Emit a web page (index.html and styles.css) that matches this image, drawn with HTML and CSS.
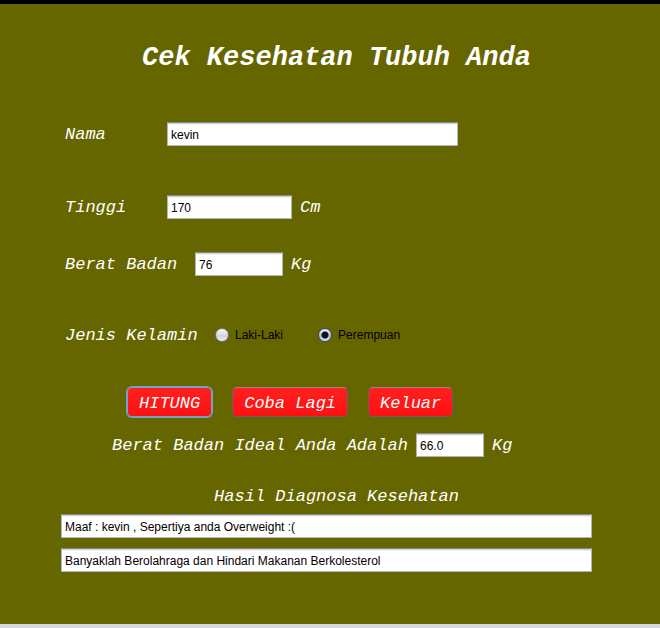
FILE: index.html
```html
<!DOCTYPE html>
<html lang="id">
<head>
<meta charset="utf-8">
<title>Cek Kesehatan Tubuh Anda</title>
<link rel="stylesheet" href="styles.css">
</head>
<body>
<main class="page">
  <h1 class="title">Cek Kesehatan Tubuh Anda</h1>
  <form class="form">
    <div class="row row-name">
      <label class="label label-short" for="nama">Nama</label>
      <input class="field field-name" id="nama" type="text" value="kevin">
    </div>
    <div class="row row-height">
      <label class="label label-short" for="tinggi">Tinggi</label>
      <input class="field field-height" id="tinggi" type="text" value="170">
      <span class="unit">Cm</span>
    </div>
    <div class="row row-weight">
      <label class="label label-long" for="berat">Berat Badan</label>
      <input class="field field-weight" id="berat" type="text" value="76">
      <span class="unit">Kg</span>
    </div>
    <div class="row row-gender" role="radiogroup" aria-labelledby="kelamin">
      <span class="label label-gender" id="kelamin">Jenis Kelamin</span>
      <label class="choice"><input class="radio" type="radio" name="kelamin">Laki-Laki</label>
      <label class="choice"><input class="radio" type="radio" name="kelamin" checked>Perempuan</label>
    </div>
    <div class="actions">
      <button class="button button-default" type="button">HITUNG</button>
      <button class="button" type="button">Coba Lagi</button>
      <button class="button" type="button">Keluar</button>
    </div>
    <div class="row row-ideal">
      <label class="label label-ideal" for="ideal">Berat Badan Ideal Anda Adalah</label>
      <input class="field field-ideal" id="ideal" type="text" value="66.0">
      <span class="unit">Kg</span>
    </div>
    <h2 class="subtitle" id="hasil">Hasil Diagnosa Kesehatan</h2>
    <div class="results">
      <input class="field" type="text" aria-labelledby="hasil" value="Maaf : kevin , Sepertiya anda Overweight :(">
      <input class="field" type="text" aria-labelledby="hasil" value="Banyaklah Berolahraga dan Hindari Makanan Berkolesterol">
    </div>
  </form>
</main>
</body>
</html>
```

FILE: styles.css
```css
* {
  box-sizing: border-box;
}

body {
  margin: 0;
  min-height: 100vh;
  border-top: 4px solid #000;
  border-bottom: 4px solid #d8d8e0;
  background: #666600;
  color: #fff;
  font: italic 17px/24px "Liberation Mono", "Courier New", monospace;
}

.page {
  padding: 38px 68px 48px 61px;
}

.title,
.subtitle {
  margin: 0;
  padding-left: 20px;
  text-align: center;
  white-space: nowrap;
}

.title {
  font-size: 27px;
  font-weight: bold;
  line-height: 32px;
}

.subtitle {
  margin-top: 28px;
  font-size: 17px;
  font-weight: normal;
  line-height: 24px;
}

.row {
  display: flex;
  align-items: center;
  height: 24px;
  padding-left: 4px;
}

.row-name {
  margin-top: 48px;
}

.row-height {
  margin-top: 49px;
}

.row-weight {
  margin-top: 33px;
}

.row-gender {
  margin-top: 47px;
}

.row-ideal {
  margin-top: 15px;
  padding-left: 51px;
}

.label,
.unit {
  flex: none;
  padding-top: 2px;
  white-space: nowrap;
}

.label-short {
  width: 102px;
}

.label-long {
  width: 130px;
}

.label-gender {
  width: 150px;
}

.label-ideal {
  width: 304px;
}

.unit {
  margin-left: 8px;
}

.field {
  width: 100%;
  height: 24px;
  padding: 2px 3px 0;
  border: 1px solid #b4b4bc;
  border-top-color: #85858d;
  border-radius: 0;
  background: #fff;
  box-shadow: inset 0 1px #d4d4d6, inset 0 2px #f0f0f0;
  color: #000;
  font: 12px "Liberation Sans", Arial, sans-serif;
}

.field-name {
  width: 291px;
}

.field-height {
  width: 125px;
}

.field-weight {
  width: 88px;
}

.field-ideal {
  width: 68px;
}

.choice {
  display: flex;
  align-items: center;
  gap: 6px;
  margin-right: 35px;
  color: #000;
  font: 12px/24px "Liberation Sans", Arial, sans-serif;
}

.radio {
  appearance: none;
  width: 14px;
  height: 14px;
  margin: 0;
  border: 1px solid #74747c;
  border-radius: 50%;
  background: linear-gradient(#fafafc, #d2d4da 60%, #f0f0f4);
}

.radio:checked {
  border-color: #2c4c70;
  background:
    radial-gradient(circle, #101418 0 3px, transparent 4px),
    linear-gradient(#e8eef6, #a9bed5 60%, #d8e8f8);
}

.actions {
  display: flex;
  align-items: center;
  gap: 20px;
  margin-top: 39px;
  padding-left: 66px;
}

.button {
  height: 30px;
  margin: 1px 0;
  padding: 3px 11px 0;
  border: 1px solid #66626a;
  border-top-color: #a08890;
  border-radius: 5px;
  background: linear-gradient(#ff2020, #ff1010);
  color: #fff;
  font: inherit;
}

.button-default {
  border-color: #73a4c8;
  box-shadow: 0 0 0 1px #73a4c8;
}

.results {
  display: grid;
  gap: 10px;
  margin-top: 5px;
}
```
